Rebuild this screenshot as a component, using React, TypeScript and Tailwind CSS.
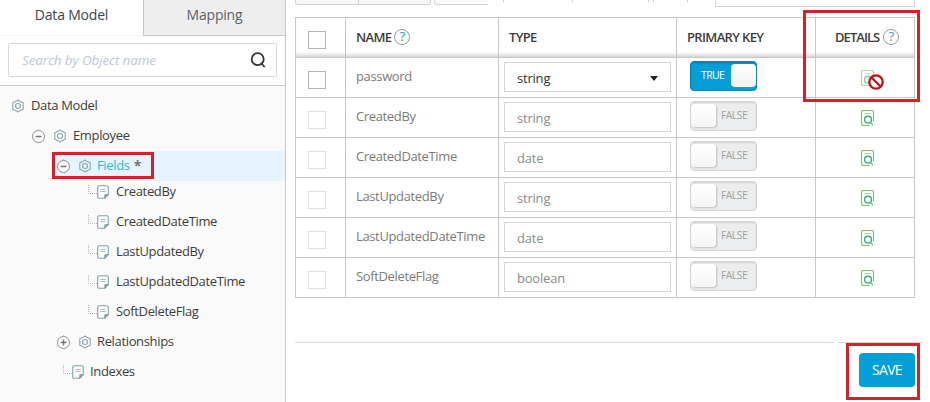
import React from "react";

const Gear = () => (
  <svg className="block h-[14px] w-[14px] shrink-0" viewBox="0 0 14 14" fill="none" stroke="#8aa5b2" strokeWidth="1.1" strokeLinejoin="round">
    <path d="M5.600 2.100 7 .9l1.400 1.200 3.800 1.600v6.600l-3.800 1.600L7 13.100l-1.400-1.200-3.800-1.600V3.700z" />
    <circle cx="7" cy="7" r="2.500" />
  </svg>
);

const Note = () => (
  <svg className="block h-[14px] w-[12px] shrink-0" viewBox="0 0 12 14" fill="none" stroke="#86a4ac" strokeWidth="1.1">
    <path d="M2 .8h8c.8 0 1.300.5 1.300 1.300v7.400L7.700 13.200H2c-.8 0-1.300-.5-1.300-1.300V2.100C.7 1.300 1.200.8 2 .8z" />
    <path d="M11.200 9.500H8.800c-.7 0-1 .4-1 1v2.600z" fill="#86a4ac" />
    <path d="M3.500 4.500h5M3.500 6.500h5" strokeWidth="1" stroke="#a9bdc2" />
  </svg>
);

const Toggle = ({ plus = false }: { plus?: boolean }) => (
  <svg className="block h-[15px] w-[15px] shrink-0" viewBox="0 0 15 15" fill="none" stroke="#8c8c8c">
    <path d="M7.500 0v1" stroke="#bbb" />
    <circle cx="7.500" cy="7.500" r="6" fill="#fff" strokeWidth="1" />
    <path d={plus ? "M4.500 7.500h6M7.500 4.500v6" : "M4.500 7.500h6"} stroke="#777" strokeWidth="1.500" />
  </svg>
);

const Branch = () => (
  <svg className="block h-[14px] w-[9px] shrink-0" viewBox="0 0 9 14" fill="none" stroke="#b5b5b5" strokeDasharray="1 1">
    <path d="M.5 0v8.500H9" />
  </svg>
);

const DetailIcon = ({ disabled = false }: { disabled?: boolean }) => (
  <svg className={disabled ? "block h-[17px] w-[15px] opacity-60" : "block h-[17px] w-[15px]"} viewBox="0 0 15 17" fill="none">
    <path d="M9.500 15.500H3.500c-1.300 0-2-.7-2-2v-11c0-1.300.7-2 2-2h8c1.300 0 2 .7 2 2v9" stroke="#7fc255" strokeWidth="1.200" />
    <path d="M4.500 3.500h6" stroke="#a9d690" strokeWidth="1.200" />
    <circle cx="8" cy="9.700" r="3.400" stroke="#2db084" strokeWidth="1.400" />
    <path d="m10.500 12.300 2.600 2.900" stroke="#5ccb9c" strokeWidth="1.300" />
  </svg>
);

const Help = () => (
  <span className="flex h-4 w-4 shrink-0 items-center justify-center rounded-full border border-[#999] text-[13px] font-normal leading-none tracking-normal text-[#1ba3dc]">?</span>
);

const Switch = ({ on = false }: { on?: boolean }) =>
  on ? (
    <div className="flex h-[30px] w-[67px] items-start justify-between rounded-[4px] border border-[#0788b3] bg-[#049fd9] pt-[2px] shadow-[inset_0_1px_2px_rgba(0,0,0,0.25)]">
      <span className="pl-[10px] pt-[3px] text-[10.5px] leading-4 tracking-[-0.6px] text-white">TRUE</span>
      <span className="h-[23px] w-[25px] rounded-[4px] bg-gradient-to-b from-white to-[#f2f2f2]" />
    </div>
  ) : (
    <div className="flex h-[30px] w-[67px] items-start rounded-[4px] border border-[#d3d4d5] bg-[#ecedee] pt-[2px] shadow-[inset_0_1px_2px_rgba(0,0,0,0.12)]">
      <span className="h-[23px] w-[25px] rounded-[4px] bg-gradient-to-b from-white to-[#f5f5f5] shadow-[1px_1px_2px_rgba(0,0,0,0.2)]" />
      <span className="pl-[5px] pt-[3px] text-[10.5px] leading-4 tracking-[-0.6px] text-[#a3a3a3]">FALSE</span>
    </div>
  );

const rows = [
  { name: "password", type: "string", active: true },
  { name: "CreatedBy", type: "string" },
  { name: "CreatedDateTime", type: "date" },
  { name: "LastUpdatedBy", type: "string" },
  { name: "LastUpdatedDateTime", type: "date" },
  { name: "SoftDeleteFlag", type: "boolean" },
];

const grid = "grid h-10 grid-cols-[50px_153px_178px_139px_99px] border-b border-[#c8c8c8]";
const cell = "border-r border-[#c8c8c8]";

const FieldRow = ({ name, type, active = false }: { name: string; type: string; active?: boolean }) => (
  <div className={grid}>
    <div className={`${cell} pl-3 pt-[13px]`}>
      <div className={active ? "h-[18px] w-[18px] border border-[#b5b5b5]" : "h-[18px] w-[18px] border border-[#e0e0e0]"} />
    </div>
    <div className={`${cell} pl-[10px] pt-2 text-[13px] leading-5 tracking-[-0.36px] text-[#7b7b7b]`}>{name}</div>
    <div className={`${cell} pl-[5px] pt-1`}>
      <div className="flex h-[30px] w-[167px] items-center justify-between border border-[#d4d4d4] pl-3 pr-3 pt-px">
        <span className={active ? "text-[13px] leading-5 tracking-[-0.2px] text-[#333]" : "text-[13px] leading-5 tracking-[-0.2px] text-[#8c8c8c]"}>{type}</span>
        {active && <span className="mt-[2px] border-x-[4.5px] border-t-[5px] border-x-transparent border-t-[#222]" />}
      </div>
    </div>
    <div className={`${cell} pl-[13px] pt-[3px]`}>
      <Switch on={active} />
    </div>
    <div className={`${cell} relative pl-[44px] pt-3`}>
      <DetailIcon disabled={active} />
      {active && (
        <svg className="absolute left-[52px] top-4 h-4 w-4" viewBox="0 0 16 16" fill="none" stroke="#c90f13" strokeWidth="2.300">
          <circle cx="8" cy="8" r="6.700" fill="#fff" />
          <path d="m3.500 3.500 9 9" />
        </svg>
      )}
    </div>
  </div>
);

const label = "relative -top-px text-[13px] leading-5 tracking-[-0.35px]";

const Leaf = ({ children }: { children: string }) => (
  <div className="flex h-[30px] items-center pl-[88px]">
    <Branch />
    <Note />
    <span className={`${label} ml-[7px]`}>{children}</span>
  </div>
);

export default function App() {
  return (
    <div className="relative flex h-[402px] w-[930px] overflow-hidden bg-white font-['Open_Sans','Noto_Sans',sans-serif] text-[#3d3d3d]">
      <aside className="flex w-[286px] shrink-0 flex-col border-r border-[#c9c9c9] bg-[#fafafa]">
        <div className="flex h-9 bg-white text-[14px] leading-5 tracking-[-0.2px]">
          <div className="w-[143px] border-b border-[#f4f4f4] pt-[5px] text-center text-[#3d4550]">Data Model</div>
          <div className="flex-1 border-b border-l border-[#c4c4c4] bg-[#eee] pt-[5px] text-center text-[#5c626c]">Mapping</div>
        </div>
        <div className="h-[50px] border-b border-[#c9c9c9] bg-white pl-2 pt-[7px]">
          <div className="flex h-[34px] w-[269px] items-center justify-between rounded-[2px] border border-[#d5d8da] pl-[13px] pr-[10px]">
            <span className="text-[13.5px] italic tracking-[-0.15px] text-[#bec8d1]">Search by Object name</span>
            <svg className="h-4 w-4" viewBox="0 0 16 16" fill="none" stroke="#333" strokeWidth="1.800">
              <circle cx="7.700" cy="7.200" r="6" />
              <path d="m11 11 3.700 4" />
            </svg>
          </div>
        </div>
        <div className="flex h-[35px] items-center pb-px pl-[11px] pt-[6px]">
          <Gear /><span className={`${label} ml-[6px]`}>Data Model</span>
        </div>
        <div className="flex h-[30px] items-center pl-[31px]">
          <Toggle /><span className="w-[7px]" /><Gear /><span className={`${label} ml-[6px]`}>Employee</span>
        </div>
        <div className="ml-[53px] flex h-[30px] items-center bg-[#e6f4fd] pl-[3px]">
          <Toggle /><span className="w-[7px]" /><Gear /><span className={`${label} ml-[5px] text-[#36b5dc]`}>Fields</span>
          <span className="ml-[4px] text-[14px] font-bold leading-5 text-[#777]">*</span>
        </div>
        <div className="-mt-1">
          <Leaf>CreatedBy</Leaf>
          <Leaf>CreatedDateTime</Leaf>
          <Leaf>LastUpdatedBy</Leaf>
          <Leaf>LastUpdatedDateTime</Leaf>
          <Leaf>SoftDeleteFlag</Leaf>
        </div>
        <div className="flex h-[30px] items-center pl-[56px]">
          <Toggle plus /><span className="w-[7px]" /><Gear /><span className={`${label} ml-[5px]`}>Relationships</span>
        </div>
        <div className="flex h-[30px] items-center pl-[63px]">
          <Branch /><Note /><span className={`${label} ml-[6px]`}>Indexes</span>
        </div>
      </aside>

      <main className="flex-1 pl-[9px]">
        <div className="flex h-[17px] items-start">
          <div className="flex h-[5px] w-[136px] rounded-b-[3px] border border-t-0 border-[#d2d2d2] bg-[#f7f7f7]">
            <div className="w-[63px] border-r border-[#d2d2d2]" />
          </div>
          <div className="ml-[3px] h-[5px] w-[54px] rounded-bl-[3px] border-b border-l border-[#d2d2d2] bg-[#fafafa]" />
          <div className="ml-[15px] h-[2px] w-[70px] border-x border-[#d2d2d2]" />
          <div className="ml-[75px] h-[2px] w-[6px] border-x border-[#d2d2d2]" />
          <div className="ml-[33px] h-[2px] w-px bg-[#d2d2d2]" />
          <div className="ml-[27px] h-[7px] w-[200px] border border-t-0 border-[#d2d2d2]" />
        </div>
        <div className="w-[620px] border-l border-t border-[#c8c8c8]">
          <div className={`${grid} text-[13px] font-semibold leading-5 tracking-[-0.7px] shadow-[inset_0_-4px_4px_-2px_rgba(0,0,0,0.2)]`}>
            <div className={`${cell} pl-3 pt-[13px]`}><div className="h-[18px] w-[18px] border border-[#b5b5b5] bg-white" /></div>
            <div className={`${cell} flex items-center gap-[3px] pb-[2px] pl-[10px]`}>NAME<Help /></div>
            <div className={`${cell} flex items-center pb-[2px] pl-[10px]`}>TYPE</div>
            <div className={`${cell} flex items-center pb-[2px] pl-[10px] tracking-[-0.65px]`}>PRIMARY KEY</div>
            <div className={`${cell} flex items-center gap-1 pb-[2px] pl-[19px] tracking-[-0.95px]`}>DETAILS<Help /></div>
          </div>
          {rows.map((r) => <FieldRow key={r.name} {...r} />)}
        </div>
        <div className="mt-11 flex h-px gap-1">
          <div className="w-[539px] bg-[#d9d9d9]" />
          <div className="w-[84px] bg-[#d9d9d9]" />
        </div>
        <button className="ml-[564px] mt-[10px] block h-[34px] w-14 rounded-[4px] bg-[#049fd9] text-[14px] leading-5 tracking-[-0.7px] text-white">SAVE</button>
      </main>

      <div className="absolute left-[52px] top-[152px] h-[27px] w-[102px] border-[3px] border-[#d9202a]" />
      <div className="absolute left-[803px] top-[10px] h-[92px] w-[117px] border-[3px] border-[#d9202a]" />
      <div className="absolute left-[846px] top-[343px] h-[57px] w-[74px] border-[3px] border-[#d9202a]" />
    </div>
  );
}
